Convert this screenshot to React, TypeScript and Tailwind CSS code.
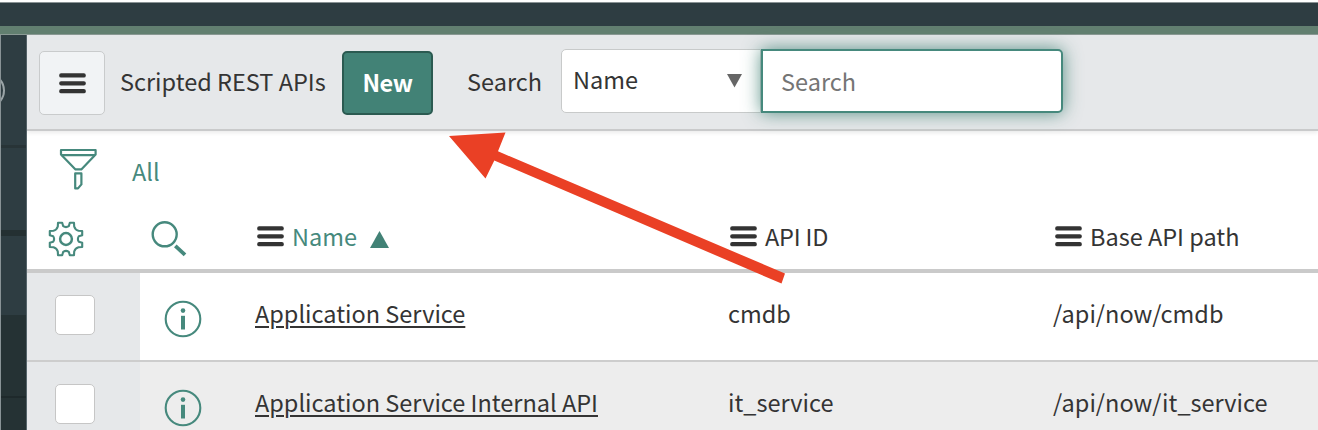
import React from "react";

function Bars() {
  return (
    <svg className="block shrink-0" width="27" height="21" viewBox="0 0 27 21" fill="#333333">
      <rect x="0.2" y="0.3" width="26.6" height="4.3" rx="1.9" />
      <rect x="0.2" y="8.2" width="26.6" height="4.3" rx="1.9" />
      <rect x="0.2" y="16" width="26.6" height="4.3" rx="1.9" />
    </svg>
  );
}

function Funnel() {
  return (
    <svg className="block shrink-0" width="40" height="44" viewBox="0 0 40 44" fill="none" stroke="#46897d" strokeWidth="2.2" strokeLinejoin="round">
      <path d="M3 3H37.6V7.6L23.3 22.4H17.5L3 7.6Z" />
      <path d="M3.6 8.2H37" />
      <path d="M17.2 26.4H23.4V37.4L20 41.4H17.2Z" />
    </svg>
  );
}

function Gear() {
  return (
    <svg className="block shrink-0" width="36" height="36" viewBox="0 0 36 36" fill="none" stroke="#46897d" strokeWidth="2.1" strokeLinejoin="round">
      <circle cx="18" cy="18" r="5.9" strokeWidth="2.5" />
      <path d="M10 1.8L14.2 1.8L15.2 5.2Q18 7 20.8 5.2L21.8 1.8L26 1.8L26.2 5.5Q27.2 8.8 30.5 9.8L34.2 10L34.2 14.2L30.8 15.2Q29 18 30.8 20.8L34.2 21.8L34.2 26L30.5 26.2Q27.2 27.2 26.2 30.5L26 34.2L21.8 34.2L20.8 30.8Q18 29 15.2 30.8L14.2 34.2L10 34.2L9.8 30.5Q8.8 27.2 5.5 26.2L1.8 26L1.8 21.8L5.2 20.8Q7 18 5.2 15.2L1.8 14.2L1.8 10L5.5 9.8Q8.8 8.8 9.8 5.5Z" />
    </svg>
  );
}

function Magnifier() {
  return (
    <svg className="block shrink-0" width="36" height="36" viewBox="0 0 36 36" fill="none" stroke="#46897d">
      <circle cx="13.7" cy="13.3" r="12" strokeWidth="2.4" />
      <path d="M24.3 24.8L34 33.8" strokeWidth="3.8" />
    </svg>
  );
}

function Info() {
  return (
    <svg className="block" width="38" height="38" viewBox="0 0 38 38" fill="none" stroke="#46897d">
      <circle cx="19" cy="19" r="17.3" strokeWidth="2.1" />
      <circle cx="19" cy="10.6" r="2.3" fill="#46897d" stroke="none" />
      <path d="M19 15.8V29.5" strokeWidth="4" />
    </svg>
  );
}

function Row({ name, id, path, shade }: { name: string; id: string; path: string; shade: string }) {
  return (
    <div className={`flex h-[89px] shrink-0 border-b-2 border-[#cdcdcd] ${shade}`}>
      <div className="w-[113px] bg-[#e6e8ea] pt-[22px] pl-7">
        <div className="h-10 w-10 rounded-[5px] border border-[#c6c6c6] bg-white" />
      </div>
      <div className="w-[115px] pt-[27px] pl-6"><Info /></div>
      <div className="w-[473px] pt-5">
        <span className="underline decoration-2 underline-offset-[3px]">{name}</span>
      </div>
      <div className="w-[325px] pt-5">{id}</div>
      <div className="pt-5">{path}</div>
    </div>
  );
}

export default function App() {
  return (
    <div className="relative flex h-[430px] w-[1318px] flex-col overflow-hidden bg-white font-['Noto_Sans_CJK_SC','Noto_Sans',sans-serif] text-[23.5px] leading-10 whitespace-nowrap text-[#343434]">
      <div className="h-[35px] shrink-0 border-t-2 border-white bg-[#2e3d42]">
        <div className="h-px bg-[#8a9395]" />
        <div className="mt-[23px] h-[9px] border-b border-[#8b9a95] bg-[#627f70]" />
      </div>
      <div className="flex min-h-0 flex-1">
        <div className="flex w-[27px] shrink-0 flex-col border-r border-l border-r-[#56656b] border-l-[#899396] bg-[#2e3d42]">
          <div className="h-[110px] overflow-hidden pt-[38px]">
            <div className="-ml-[31px] h-[35px] w-[35px] rounded-full border-2 border-[#9aa4a7]" />
          </div>
          <div className="h-[3px] bg-[#283437]" />
          <div className="h-[82px]" />
          <div className="h-[6px] bg-[#243032]" />
          <div className="h-[79px]" />
          <div className="h-[81px] bg-[#253234]" />
          <div className="h-[2px] bg-[#1e292b]" />
          <div className="flex-1 bg-[#253234]" />
        </div>
        <div className="flex min-w-0 flex-1 flex-col">
          <div className="flex h-24 shrink-0 border-b-2 border-[#c9cacb] bg-[#e6e8ea] pl-3 shadow-[0_2px_4px_rgba(0,0,0,0.08)]">
            <button className="mt-4 flex h-16 w-[66px] items-center justify-center rounded-[5px] border border-[#c9cbcc] bg-[#f1f3f5]"><Bars /></button>
            <div className="ml-[15px] w-[222px] pt-[26px]">Scripted REST APIs</div>
            <button className="mt-4 h-16 w-[91px] rounded-[5px] border-2 border-[#2b5a51] bg-[#428276] pb-[3px] font-bold tracking-[-0.4px] text-white">New</button>
            <div className="ml-[34px] w-[94px] pt-[26px]">Search</div>
            <div className="mt-[14px] flex h-16 w-[200px] justify-between rounded-l-[5px] border border-[#c8caca] bg-white pt-[9px] pr-[18px] pl-[11px]">
              <span>Name</span>
              <svg className="mt-[15px]" width="15" height="14" viewBox="0 0 15 14"><path d="M0 0H15L7.5 13.5Z" fill="#666" /></svg>
            </div>
            <div className="mt-[14px] h-16 w-[302px] rounded-r-[5px] border-2 border-[#46897d] bg-white pt-[10px] pl-[18px] text-[#757575] shadow-[0_0_18px_rgba(66,130,118,0.85)]">Search</div>
          </div>
          <div className="flex h-[73px] shrink-0 pt-4 pl-[31px] text-[#46897d]">
            <Funnel />
            <div className="ml-[34px] pt-1">All</div>
          </div>
          <div className="flex h-[69px] shrink-0 border-b-4 border-[#cacaca]">
            <div className="w-[103px] pt-[17px] pl-[21px]"><Gear /></div>
            <div className="w-[127px] pt-[17px] pl-[21px]"><Magnifier /></div>
            <div className="flex w-[473px] pt-3">
              <div className="pt-[10px]"><Bars /></div>
              <span className="ml-2 text-[#46897d]">Name</span>
              <svg className="mt-[15px] ml-[13px]" width="19" height="17" viewBox="0 0 19 17"><path d="M0 17H19L9.5 0Z" fill="#428276" /></svg>
            </div>
            <div className="flex w-[325px] pt-3">
              <div className="pt-[10px]"><Bars /></div><span className="ml-2 tracking-[-0.2px]">API ID</span>
            </div>
            <div className="flex pt-3">
              <div className="pt-[10px]"><Bars /></div><span className="ml-2">Base API path</span>
            </div>
          </div>
          <Row name="Application Service" id="cmdb" path="/api/now/cmdb" shade="bg-white" />
          <Row name="Application Service Internal API" id="it_service" path="/api/now/it_service" shade="bg-[#ededed]" />
        </div>
      </div>
      <svg className="pointer-events-none absolute top-0 left-0" width="1318" height="430" viewBox="0 0 1318 430">
        <path d="M449 136L505.500 132.500L498 151.300L785 273.500L781.500 283.500L494.300 160.500L485.500 178.500Z" fill="#ea4025" />
      </svg>
    </div>
  );
}
